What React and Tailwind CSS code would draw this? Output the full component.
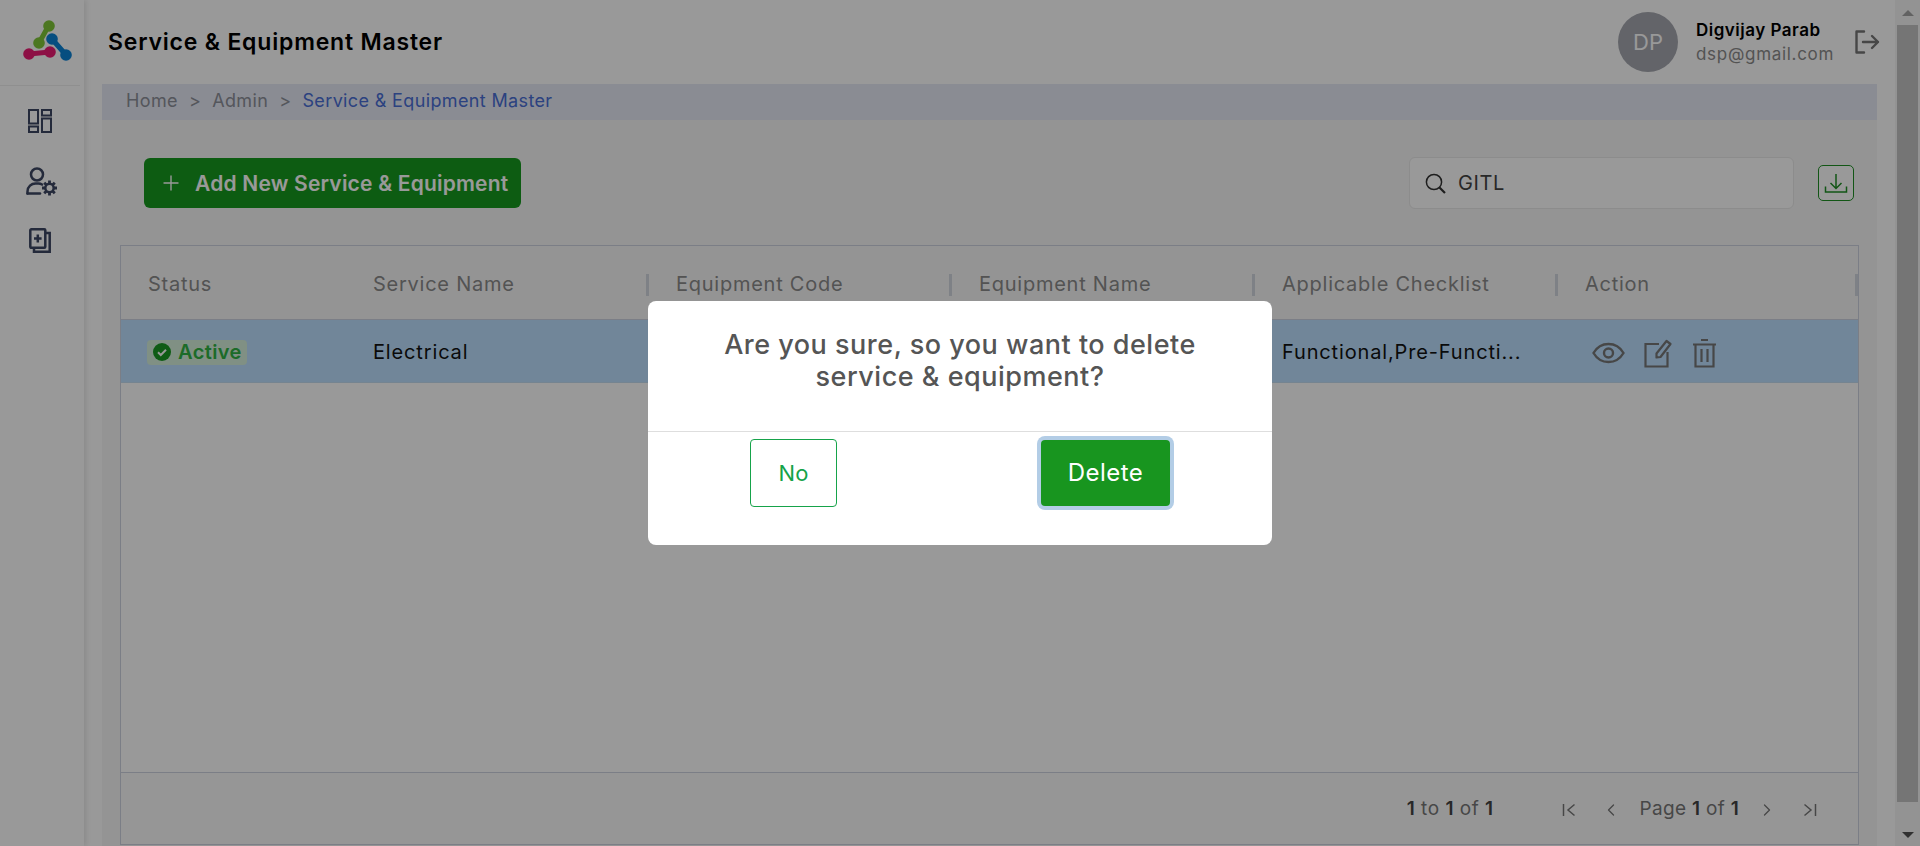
import { ChevronLeft, ChevronRight, Plus } from "lucide-react";

const font = { fontFamily: "Inter, 'Noto Sans', sans-serif" };

function Logo() {
  return (
    <svg width="50" height="46" viewBox="0 0 50 46" fill="none" strokeLinecap="round">
      <path d="M26 6 L16 24" stroke="#7fc638" strokeWidth="5" />
      <circle cx="26" cy="7" r="5.8" fill="#7fc638" />
      <circle cx="16" cy="24" r="5.8" fill="#7fc638" />
      <path d="M29 20 L43 36" stroke="#0a82d6" strokeWidth="5" />
      <circle cx="29" cy="20" r="5.8" fill="#0a82d6" />
      <circle cx="43" cy="36" r="5.8" fill="#0a82d6" />
      <path d="M6 35 L27 33" stroke="#ec1c73" strokeWidth="5" />
      <circle cx="6" cy="35" r="5.8" fill="#ec1c73" />
      <circle cx="27" cy="33" r="5.8" fill="#ec1c73" />
    </svg>
  );
}

function DashIcon() {
  return (
    <svg width="24" height="24" viewBox="0 0 24 24" fill="none" stroke="#3c4663" strokeWidth="2">
      <rect x="1" y="1" width="9" height="13.5" />
      <rect x="14" y="1" width="9" height="5.5" />
      <rect x="1" y="17.5" width="9" height="5.5" />
      <rect x="14" y="9.5" width="9" height="13.5" />
    </svg>
  );
}

function UserGearIcon() {
  return (
    <svg width="32" height="30" viewBox="0 0 32 30" fill="none" stroke="#3c4663" strokeWidth="2.5">
      <circle cx="11" cy="7.5" r="6" />
      <path d="M1.5 26.5v-2c0-5 4-8 8-8h3c1.4 0 2.6.4 3.5 1" strokeLinecap="round" />
      <path d="M1.5 26.5H14" strokeLinecap="round" />
      <circle cx="23.5" cy="21" r="4.2" />
      <path
        d="M23.5 13.5v3M23.5 25.5v3M16 21h3M28 21h3M18.2 15.7l2.1 2.1M26.7 24.2l2.1 2.1M18.2 26.3l2.1-2.1M26.7 17.8l2.1-2.1"
        strokeWidth="2.8"
      />
    </svg>
  );
}

function DocPlusIcon() {
  return (
    <svg width="22" height="25" viewBox="0 0 22 25" fill="none" stroke="#3c4663" strokeWidth="2.5">
      <rect x="1.3" y="1.3" width="15" height="18.5" rx="1" />
      <path d="M17 5h3.7v18.7H5V20" />
      <path d="M8.8 6.5v8M5 10.5h7.6" />
    </svg>
  );
}

function LogoutIcon() {
  return (
    <svg width="26" height="24" viewBox="0 0 26 24" fill="none" stroke="#777" strokeWidth="2.4" strokeLinecap="round" strokeLinejoin="round">
      <path d="M10 1.5H2.5v21H10" />
      <path d="M9 12h15M18 6l6 6-6 6" />
    </svg>
  );
}

function SearchIcon() {
  return (
    <svg width="21" height="21" viewBox="0 0 21 21" fill="none" stroke="#333" strokeWidth="1.5">
      <circle cx="9" cy="9" r="7.6" />
      <path d="M14.5 14.5l5.5 5.5" strokeWidth="2.2" />
    </svg>
  );
}

function DownloadIcon() {
  return (
    <svg width="24" height="24" viewBox="0 0 24 24" fill="none" stroke="#1f8f24" strokeWidth="1.5">
      <path d="M12 3v14M6.5 12l5.5 5.5 5.5-5.5" />
      <path d="M1.5 15.5v5.5h21v-5.5" />
    </svg>
  );
}

function EyeIcon() {
  return (
    <svg width="33" height="22" viewBox="0 0 33 22" fill="none" stroke="#777" strokeWidth="2.4">
      <path d="M1.5 11C5 5 10 2 16.5 2S28 5 31.5 11C28 17 23 20 16.5 20S5 17 1.5 11Z" />
      <circle cx="16.5" cy="11" r="4.5" />
    </svg>
  );
}

function EditIcon() {
  return (
    <svg width="29" height="29" viewBox="0 0 29 29" fill="none" stroke="#777" strokeWidth="2.2">
      <path d="M15 5H1.5v22.5h22V13" />
      <path d="M12.5 18.5v-4L22.5 2l4 3-10 13z" strokeLinejoin="round" />
    </svg>
  );
}

function TrashIcon() {
  return (
    <svg width="25" height="30" viewBox="0 0 25 30" fill="none" stroke="#777" strokeWidth="2.2">
      <path d="M1 6.5h23M9 2h7" />
      <path d="M3.5 6.5v22h18v-22" />
      <path d="M9.5 11v13M15.5 11v13" />
    </svg>
  );
}

function FirstIcon() {
  return (
    <svg width="14" height="14" viewBox="0 0 14 14" fill="none" stroke="#777" strokeWidth="1.5">
      <path d="M1.5 1v12M12.5 1.5L6 7l6.5 5.5" />
    </svg>
  );
}

function LastIcon() {
  return (
    <svg width="14" height="14" viewBox="0 0 14 14" fill="none" stroke="#777" strokeWidth="1.5">
      <path d="M12.5 1v12M1.5 1.5L8 7l-6.5 5.5" />
    </svg>
  );
}

function HeadCell({ children, divider = true }) {
  return (
    <div className="relative flex items-center pl-[27px] pt-[2px] text-[20px] tracking-[0.75px] text-[#8b8b8b]">
      {children}
      {divider && <span className="absolute right-0 top-[28px] h-[22px] w-[3px] bg-[#d3d7df]" />}
    </div>
  );
}

export default function App() {
  return (
    <div className="relative flex h-screen w-full overflow-hidden bg-white" style={font}>
      {/* sidebar */}
      <aside className="relative flex w-[84px] shrink-0 flex-col bg-white shadow-[2px_0_5px_rgba(0,0,0,0.1)]">
        <div className="mr-1 flex h-[86px] items-center justify-center border-b border-[#eeeeee] pl-[16px] pb-[2px]">
          <Logo />
        </div>
        <div className="flex flex-col items-center pr-[4px]">
          <div className="mt-[23px]"><DashIcon /></div>
          <div className="ml-[3px] mt-[34px]"><UserGearIcon /></div>
          <div className="mt-[31px]"><DocPlusIcon /></div>
        </div>
      </aside>

      {/* main */}
      <div className="flex min-w-0 flex-1 flex-col">
        <header className="flex h-[84px] shrink-0 items-center pl-[24px]">
          <h1 className="text-[23px] font-semibold tracking-[0.8px] text-black">Service &amp; Equipment Master</h1>
          <div className="ml-auto mr-[15px] flex items-center">
            <div className="flex h-[60px] w-[60px] items-center justify-center rounded-full bg-[#a5a7af] text-[22px] text-white">DP</div>
            <div className="ml-[18px] w-[158px]">
              <div className="text-[17px] font-semibold leading-[24px] tracking-[0.5px] text-black">Digvijay Parab</div>
              <div className="text-[17px] leading-[24px] tracking-[0.7px] text-[#8b8b8b]">dsp@gmail.com</div>
            </div>
            <LogoutIcon />
          </div>
        </header>

        <div className="ml-[18px] mr-[18px] flex min-h-0 flex-1 flex-col bg-[#f7f7f7]">
          <div className="flex h-[36px] shrink-0 items-center gap-[11px] bg-[#e6eaf5] pb-[3px] pl-[24px] text-[18px] tracking-[0.36px] text-[#8d8f99]">
            <span>Home</span>
            <span>&gt;</span>
            <span>Admin</span>
            <span>&gt;</span>
            <span className="text-[#4a6ed6]">Service &amp; Equipment Master</span>
          </div>

          <div className="mt-[37px] flex h-[52px] shrink-0 items-center pl-[42px] pr-[23px]">
            <button className="flex h-[50px] w-[377px] items-center rounded-[6px] bg-[#16991e] pl-[15px] text-[21px] font-semibold tracking-[0.2px] text-white">
              <Plus size={24} strokeWidth={1.4} />
              <span className="ml-[12px] pt-[2px]">Add New Service &amp; Equipment</span>
            </button>
            <div className="ml-auto flex h-[52px] w-[385px] items-center rounded-[6px] border border-[#e9e9e9] bg-white pl-[15px]">
              <SearchIcon />
              <span className="ml-[12px] text-[20px] tracking-[0.6px] text-[#444]">GITL</span>
            </div>
            <button className="ml-[24px] flex h-[36px] w-[36px] items-center justify-center rounded-[5px] border border-[#1f8f24] bg-white">
              <DownloadIcon />
            </button>
          </div>

          {/* table */}
          <div className="ml-[18px] mr-[18px] mt-[36px] flex h-[600px] shrink-0 flex-col border border-[#cdd3df] bg-white">
            <div className="grid h-[74px] shrink-0 grid-cols-[225px_303px_303px_303px_303px_1fr] border-b border-[#cdd3df] bg-[#f7f7f7]">
              <HeadCell divider={false}>Status</HeadCell>
              <HeadCell>Service Name</HeadCell>
              <HeadCell>Equipment Code</HeadCell>
              <HeadCell>Equipment Name</HeadCell>
              <HeadCell>Applicable Checklist</HeadCell>
              <HeadCell>Action</HeadCell>
            </div>
            <div className="grid h-[63px] shrink-0 grid-cols-[225px_303px_303px_303px_303px_1fr] border-b border-[#c4dcf0] bg-[#bce0ff] pt-[2px] text-[20px] tracking-[0.85px] text-[#111]">
              <div className="flex items-center pl-[26px]">
                <span className="flex h-[25px] w-[100px] items-center rounded-[4px] bg-[#d5f0dc] pl-[6px] font-semibold tracking-[0.4px] text-[#2fb344]">
                  <svg width="18" height="18" viewBox="0 0 18 18" className="mr-[7px]">
                    <circle cx="9" cy="9" r="9" fill="#1a9a24" />
                    <path d="M5 9.2l2.8 2.8L13 6.8" fill="none" stroke="#fff" strokeWidth="2" />
                  </svg>
                  Active
                </span>
              </div>
              <div className="flex items-center pl-[27px]">Electrical</div>
              <div />
              <div />
              <div className="flex items-center pl-[27px]">Functional,Pre-Functi...</div>
              <div className="flex items-center pl-[34px] pt-[2px]">
                <EyeIcon />
                <span className="ml-[19px]"><EditIcon /></span>
                <span className="ml-[19px]"><TrashIcon /></span>
              </div>
            </div>
            <div className="flex-1" />
            <div className="flex h-[72px] shrink-0 items-center border-t border-[#cdd3df] bg-[#fbfbfb] pt-[2px] text-[19px] tracking-[0.5px] text-[#777]">
              <div className="ml-auto flex items-center pr-[41px]">
                <span><b className="font-semibold text-[#444]">1</b> to <b className="font-semibold text-[#444]">1</b> of <b className="font-semibold text-[#444]">1</b></span>
                <span className="ml-[68px]"><FirstIcon /></span>
                <ChevronLeft size={20} strokeWidth={1.6} className="ml-[25px] text-[#777]" />
                <span className="ml-[19px] tracking-[0.3px]">Page <b className="font-semibold text-[#444]">1</b> of <b className="font-semibold text-[#444]">1</b></span>
                <ChevronRight size={20} strokeWidth={1.6} className="ml-[18px] text-[#777]" />
                <span className="ml-[26px]"><LastIcon /></span>
              </div>
            </div>
          </div>
        </div>
      </div>

      {/* scrollbar */}
      <div className="flex w-[25px] shrink-0 flex-col items-center bg-[#f6f6f6] pb-[8px] pt-[10px]">
        <svg width="12" height="6" viewBox="0 0 12 6" className="shrink-0"><path d="M6 0l6 6H0z" fill="#a3a3a3" /></svg>
        <div className="mt-[9px] mb-[30px] w-[21px] flex-1 bg-[#c4c4c4]" />
        <svg width="12" height="6" viewBox="0 0 12 6" className="shrink-0"><path d="M6 6l6-6H0z" fill="#505050" /></svg>
      </div>

      {/* modal */}
      <div className="absolute inset-0 bg-black/40" />
      <div className="absolute left-[648px] top-[301px] flex h-[244px] w-[624px] flex-col rounded-[8px] bg-white">
        <div className="flex h-[131px] justify-center border-b border-[#dedede] pt-[28px]">
          <p className="w-[500px] text-center text-[27px] font-medium leading-[32px] tracking-[0.5px] text-[#555]">
            Are you sure, so you want to delete service &amp; equipment?
          </p>
        </div>
        <div className="flex items-start pt-[7px]">
          <button className="ml-[102px] h-[68px] w-[87px] rounded-[4px] border border-[#16a34a] text-[22px] text-[#16a34a]">No</button>
          <button className="ml-[204px] mt-[1px] h-[66px] w-[129px] rounded-[4px] bg-[#18951f] text-[24px] tracking-[0.5px] text-white ring-4 ring-[#b3cde6]">Delete</button>
        </div>
      </div>
    </div>
  );
}
